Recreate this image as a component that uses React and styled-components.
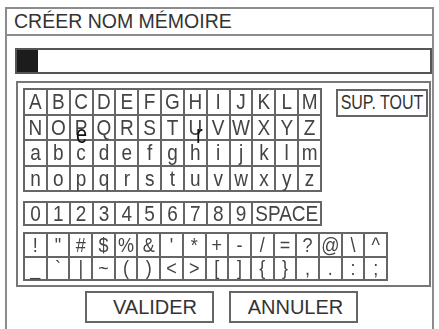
import React from 'react';
import styled, { createGlobalStyle } from 'styled-components';

const Global = createGlobalStyle`
  html, body { margin: 0; padding: 0; background: #fff; overflow: hidden; }
  body { font-family: "Liberation Sans", Arial, sans-serif; }
`;

const Frame = styled.div`
  box-sizing: border-box;
  margin: 7px 0 0 5px;
  width: 429px;
  height: 322px;
  border: 2px solid #8c8c8c;
  border-bottom: none;
`;

const TitleBar = styled.div`
  height: 25px;
  line-height: 25px;
  padding-left: 7px;
  border-bottom: 2px solid #8c8c8c;
  font-size: 19.5px;
  color: #333;
  white-space: nowrap;
`;

const InputField = styled.div`
  box-sizing: border-box;
  margin: 12px 0 0 8px;
  width: 417px;
  height: 26px;
  border: 2px solid #555;
  display: flex;
`;

const Cursor = styled.div`
  width: 21px;
  height: 100%;
  background: #1c1c1c;
`;

const Panel = styled.div`
  box-sizing: border-box;
  margin: 7px 0 0 9px;
  width: 415px;
  height: 206px;
  border: 2px solid #777;
  padding: 5px 0 0 5px;
  display: flex;
  flex-direction: column;
`;

const TopRow = styled.div`
  display: flex;
  align-items: flex-start;
  gap: 14px;
`;

const KeyGrid = styled.div`
  position: relative;
  box-sizing: border-box;
  display: grid;
  grid-template-columns: repeat(${p => p.$cols}, 1fr);
  grid-auto-rows: 1fr;
  gap: 2px;
  padding: 2px;
  background: #666;
  width: ${p => p.$w}px;
  height: ${p => p.$h}px;
  margin-top: ${p => p.$mt || 0}px;
`;

const Cell = styled.div`
  background: #fff;
  display: flex;
  align-items: center;
  justify-content: center;
  grid-column: span ${p => p.$span || 1};
  font-size: ${p => p.$fs || 19}px;
  color: #444;
  min-width: 0;
  min-height: 0;
`;

const Glyph = styled.span`
  display: inline-block;
  line-height: 1;
  transform: scaleY(${p => p.$sy || 1.2}) translateZ(0);
  white-space: nowrap;
`;

const Ink = styled.span`
  position: absolute;
  left: ${p => p.$x}px;
  top: ${p => p.$y}px;
  font-size: 20px;
  line-height: 20px;
  color: #111;
  transform: scaleY(1.25);
  transform-origin: 50% 17px;
  pointer-events: none;
`;

const ClearAll = styled.div`
  box-sizing: border-box;
  margin-top: 1px;
  width: 92px;
  height: 28px;
  border: 2px solid #666;
  display: flex;
  align-items: center;
  justify-content: center;
  font-size: 16px;
  color: #333;
  white-space: nowrap;
`;

const ClearText = styled.span`
  display: inline-block;
  transform: scaleY(1.28);
  line-height: 1;
`;

const ButtonRow = styled.div`
  display: flex;
  gap: 15px;
  margin: 4px 0 0 78px;
`;

const DialogButton = styled.button`
  box-sizing: border-box;
  width: 129px;
  height: 32px;
  border: 2px solid #666;
  background: #fff;
  font-family: inherit;
  font-size: 20px;
  color: #333;
  padding: 0 0 0 ${p => p.$shift || 0}px;
  margin: 0;
  display: flex;
  align-items: center;
  justify-content: center;
`;

const upper = 'ABCDEFGHIJKLMNOPQRSTUVWXYZ'.split('');
const lower = 'abcdefghijklmnopqrstuvwxyz'.split('');
const digits = '0123456789'.split('');
const sym1 = ['!', '"', '#', '$', '%', '&', "'", '*', '+', '-', '/', '=', '?', '@', '\\', '^'];
const sym2 = ['_', '`', '|', '~', '(', ')', '<', '>', '[', ']', '{', '}', ',', '.', ':', ';'];

export default function App() {
  return (
    <>
      <Global />
      <Frame>
        <TitleBar>CRÉER NOM MÉMOIRE</TitleBar>
        <InputField>
          <Cursor />
        </InputField>
        <Panel>
          <TopRow>
            <KeyGrid $cols={13} $w={299} $h={104}>
              {[...upper, ...lower].map((c, i) => (
                <Cell key={i}><Glyph>{c}</Glyph></Cell>
              ))}
              <Ink $x={53} $y={38}>e</Ink>
              <Ink $x={173} $y={38}>r</Ink>
            </KeyGrid>
            <ClearAll><ClearText>SUP. TOUT</ClearText></ClearAll>
          </TopRow>
          <KeyGrid $cols={13} $w={299} $h={25} $mt={9}>
            {digits.map(c => (
              <Cell key={c}><Glyph $sy={1.15}>{c}</Glyph></Cell>
            ))}
            <Cell $span={3}><Glyph $sy={1.2}>SPACE</Glyph></Cell>
          </KeyGrid>
          <KeyGrid $cols={16} $w={365} $h={49} $mt={6}>
            {[...sym1, ...sym2].map((c, i) => (
              <Cell key={i} $fs={18}><Glyph $sy={1.1}>{c}</Glyph></Cell>
            ))}
          </KeyGrid>
        </Panel>
        <ButtonRow>
          <DialogButton $shift={11}>VALIDER</DialogButton>
          <DialogButton $shift={4}>ANNULER</DialogButton>
        </ButtonRow>
      </Frame>
    </>
  );
}
